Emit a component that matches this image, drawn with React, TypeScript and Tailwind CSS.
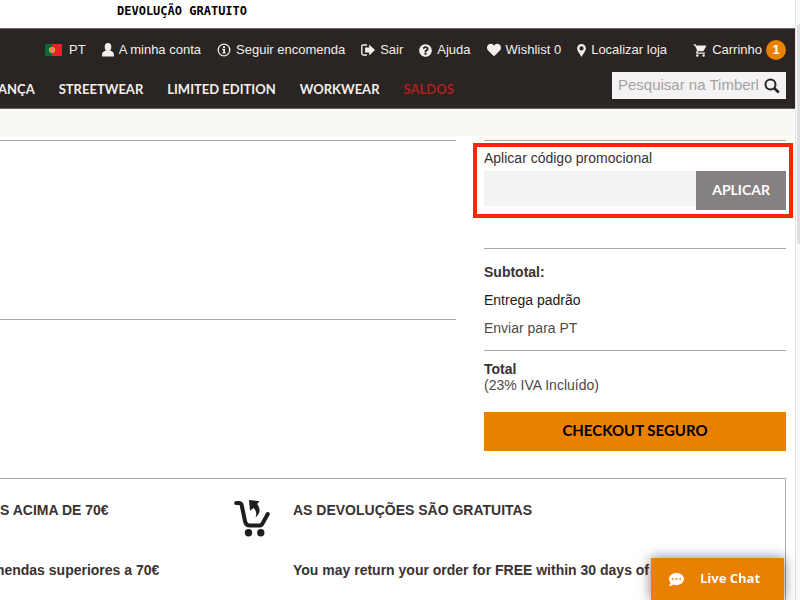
import type { ReactNode } from 'react'
import { FaCommentDots, FaHeart, FaQuestionCircle } from 'react-icons/fa'
import { MdShoppingCart } from 'react-icons/md'

function FlagIcon() {
  return (
    <svg width="19" height="12" viewBox="0 0 19 12" aria-hidden="true">
      <rect width="7" height="12" fill="#046a38" />
      <rect x="7" width="10" height="12" fill="#e8202c" />
      <circle cx="7" cy="6" r="3" fill="#d9b53c" />
      <circle cx="7" cy="6" r="1.7" fill="#d8464a" />
      <circle cx="7" cy="6" r="0.8" fill="#dfe6f2" />
    </svg>
  )
}

function UserIcon() {
  return (
    <svg width="12" height="14" viewBox="0 0 12 14" fill="currentColor" aria-hidden="true">
      <ellipse cx="6" cy="4" rx="3.3" ry="4" />
      <path d="M4 7.200h4c.3.900 3.500.900 3.800 3.300l.2 3H0l.2-3C.5 8.100 3.700 8.100 4 7.200z" />
    </svg>
  )
}

function InfoIcon() {
  return (
    <svg width="14" height="14" viewBox="0 0 14 14" aria-hidden="true">
      <circle cx="7" cy="7" r="5.8" fill="none" stroke="currentColor" strokeWidth="1.3" />
      <path d="M6 3.200h2v1.700H6zM5.300 5.800H8v3.700h.8v1.100H5.300V9.500h.9V6.900h-.9z" fill="currentColor" />
    </svg>
  )
}

function LogoutIcon() {
  return (
    <svg width="14" height="12" viewBox="0 0 14 12" aria-hidden="true">
      <path d="M6 1H2.200Q.8 1 .8 2.400v7.200Q.8 11 2.200 11H6" fill="none" stroke="currentColor" strokeWidth="1.4" />
      <path d="M4 3.600h4.200V.6L14 6l-5.800 5.400v-3H4z" fill="currentColor" />
    </svg>
  )
}

function PinIcon() {
  return (
    <svg width="9" height="13" viewBox="0 0 9 13" aria-hidden="true">
      <path
        d="M4.500 0A4.400 4.400 0 0 1 8.900 4.400C8.900 6.800 6 10 4.500 13 3 10 .1 6.800.1 4.400A4.400 4.400 0 0 1 4.500 0zm0 2.300a2.100 2.100 0 1 0 0 4.200 2.100 2.100 0 0 0 0-4.200z"
        fill="currentColor"
        fillRule="evenodd"
      />
    </svg>
  )
}

function SearchIcon() {
  return (
    <svg width="16" height="16" viewBox="0 0 16 16" fill="none" stroke="currentColor" aria-hidden="true">
      <circle cx="6.500" cy="6.500" r="5" strokeWidth="2" />
      <path d="M10.300 10.300l4.500 4.200" strokeWidth="2.6" />
    </svg>
  )
}

function ReturnCartIcon() {
  return (
    <svg width="36" height="37" viewBox="0 0 36 37" aria-hidden="true">
      <path
        d="M2.100 3.100h2.700q2.300 0 2.900 2.200l3.400 16.200q.9 4.100 4.500 4.100h9.200q2.400 0 3.700-2.200L33.800 14"
        fill="none"
        stroke="currentColor"
        strokeWidth="4"
        strokeLinecap="round"
      />
      <circle cx="14.500" cy="32.700" r="3.700" fill="currentColor" />
      <circle cx="26.800" cy="32.700" r="3.700" fill="currentColor" />
      <path d="M15 0l10.500 1.300-2.300 2.800c3.600 4.800 3.100 9.800-1.700 13.400 1.400-3.800.9-6.700-2-9.400L16 10.800z" fill="currentColor" />
    </svg>
  )
}

const topLinks: { label: string; icon: ReactNode }[] = [
  { label: 'PT', icon: <FlagIcon /> },
  { label: 'A minha conta', icon: <UserIcon /> },
  { label: 'Seguir encomenda', icon: <InfoIcon /> },
  { label: 'Sair', icon: <LogoutIcon /> },
  { label: 'Ajuda', icon: <FaQuestionCircle size={13} /> },
  { label: 'Wishlist 0', icon: <FaHeart size={14} /> },
  { label: 'Localizar loja', icon: <PinIcon /> },
]

const navLinks = ['ANÇA', 'STREETWEAR', 'LIMITED EDITION', 'WORKWEAR', 'SALDOS']

function Header() {
  return (
    <header className="border-y border-[#6b6664] bg-[#2a2422] pt-[11px] pr-[9px] pb-[9px] text-[#f1efee]">
      <div className="flex h-5 items-center gap-4 pl-[45px] text-[13px] whitespace-nowrap">
        {topLinks.map(link => (
          <a key={link.label} href="#" className="flex items-center gap-[5px]">
            {link.icon}
            {link.label}
          </a>
        ))}
        <a href="#" className="ml-auto flex items-center gap-1">
          <MdShoppingCart size={15} />
          Carrinho
          <span className="flex size-5 items-center justify-center rounded-full bg-[#ea8000] font-bold text-white">1</span>
        </a>
      </div>
      <div className="mt-3 flex items-center justify-between gap-4">
        <nav className="-ml-0.5 flex gap-6 pt-1.5 font-[Lato,sans-serif] text-[13px] leading-5 font-bold whitespace-nowrap">
          {navLinks.map(label => (
            <a key={label} href="#" className={label === 'SALDOS' ? 'text-[#a9211d]' : ''}>
              {label}
            </a>
          ))}
        </nav>
        <form className="flex h-[27px] w-[174px] items-center gap-1.5 bg-[#f4f2f2] px-1.5 text-[#2a2422]" onSubmit={e => e.preventDefault()}>
          <input
            type="text"
            aria-label="Pesquisar"
            placeholder="Pesquisar na Timberland"
            className="min-w-0 flex-1 text-[15px] outline-none placeholder:text-[#a5a2a1]"
          />
          <button type="submit" aria-label="Pesquisar">
            <SearchIcon />
          </button>
        </form>
      </div>
    </header>
  )
}

function OrderSummary() {
  return (
    <aside className="w-[302px] shrink-0 border-t border-[#a9a9a9] pt-2 text-sm">
      <form className="relative mb-[38px]" onSubmit={e => e.preventDefault()}>
        <label htmlFor="promo" className="mb-1 block leading-[18px]">
          Aplicar código promocional
        </label>
        <div className="flex items-start">
          <input id="promo" type="text" className="h-[35px] min-w-0 flex-1 bg-[#f4f3f2] px-2" />
          <button type="submit" className="h-[39px] bg-[#868181] px-4 pb-0.5 font-[Lato,sans-serif] font-bold text-white">
            APLICAR
          </button>
        </div>
        <div className="pointer-events-none absolute -top-1.5 -right-[7px] -bottom-2 -left-[11px] border-4 border-[#ff2600]" />
      </form>
      <div className="flex flex-col gap-2 border-t border-[#a9a9a9] pt-[13px] pb-3 leading-5">
        <p className="font-bold">Subtotal:</p>
        <p className="text-[#1c1919]">Entrega padrão</p>
        <p className="text-[#4f4a49]">Enviar para PT</p>
      </div>
      <div className="border-t border-[#a9a9a9] pt-[10px] leading-4">
        <p className="font-bold">Total</p>
        <p className="text-[#4f4a49]">(23% IVA Incluído)</p>
      </div>
      <button className="mt-[19px] h-[39px] w-full bg-[#ea8000] pb-0.5 font-[Lato,sans-serif] text-[15px] font-bold text-black">
        CHECKOUT SEGURO
      </button>
    </aside>
  )
}

function Benefits() {
  return (
    <section className="mt-[27px] mr-[9px] flex flex-1 border-t border-r border-[#a9a9a9] pt-[21px] text-sm leading-5 font-bold whitespace-nowrap">
      <div className="w-[234px] shrink-0">
        <h2>S ACIMA DE 70€</h2>
        <p className="-ml-2 pt-10">mendas superiores a 70€</p>
      </div>
      <div className="w-[59px] shrink-0 text-[#1f1d1d]">
        <ReturnCartIcon />
      </div>
      <div>
        <h2>AS DEVOLUÇÕES SÃO GRATUITAS</h2>
        <p className="pt-10">You may return your order for FREE within 30 days of</p>
      </div>
    </section>
  )
}

export default function App() {
  return (
    <div className="flex min-h-screen overflow-hidden bg-white font-['Liberation_Sans',Arial,sans-serif] text-[#393232]">
      <div className="flex min-w-0 flex-1 flex-col">
        <p className="h-7 pl-[117px] font-['DejaVu_Sans_Mono',monospace] text-xs leading-[22px] font-bold text-black">
          DEVOLUÇÃO GRATUITO
        </p>
        <Header />
        <div className="h-[27px] bg-[#faf8f4]" />
        <main className="flex items-start gap-7 pt-1 pr-[9px]">
          <div className="h-[180px] flex-1 border-y border-[#a9a9a9]" />
          <OrderSummary />
        </main>
        <Benefits />
      </div>
      <div className="w-[5px] border-l border-[#e4e4e4] bg-[#fafafa] pt-6 pl-px">
        <div className="h-[220px] rounded-l-sm bg-[#dedede]" />
      </div>
      <button className="fixed right-4 bottom-0 flex h-[42px] w-[133px] items-center gap-4 bg-[#ea8000] pl-[18px] font-['Open_Sans',sans-serif] text-[13px] font-bold text-white shadow-[0_0_12px_rgba(0,0,0,0.5)]">
        <FaCommentDots size={15} />
        Live Chat
      </button>
    </div>
  )
}
